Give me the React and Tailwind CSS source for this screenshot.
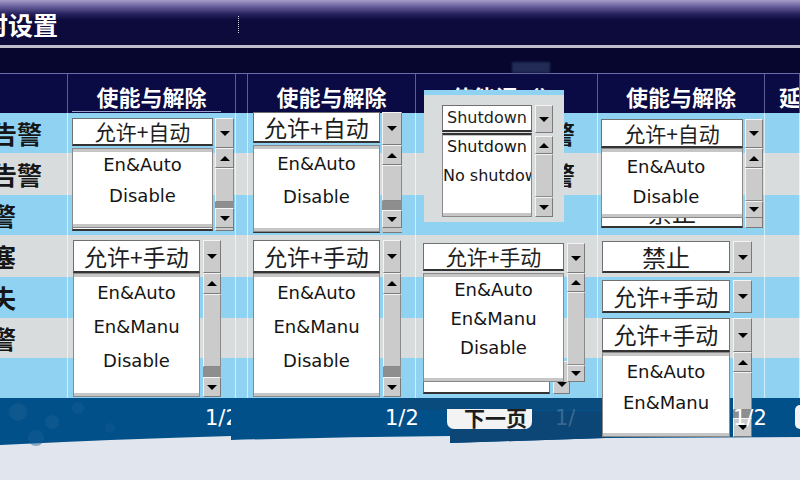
import React from "react";

const CJK = "font-['Noto_Sans_CJK_SC','Noto_Sans',sans-serif]";
const LAT = "font-['DejaVu_Sans','Noto_Sans_CJK_SC',sans-serif]";

function Tri({ up }) {
  return up ? (
    <div className="w-0 h-0 border-l-[5px] border-r-[5px] border-b-[5px] border-l-transparent border-r-transparent border-b-black" />
  ) : (
    <div className="w-0 h-0 border-l-[5px] border-r-[5px] border-t-[5px] border-l-transparent border-r-transparent border-t-black" />
  );
}

function Bevel({ cls = "", children }) {
  return (
    <div
      className={`flex justify-center bg-[#cbcbcb] border border-t-[#f4f4f4] border-l-[#f4f4f4] border-r-[#7a7a7a] border-b-[#7a7a7a] shrink-0 ${cls}`}
    >
      {children}
    </div>
  );
}

function Combo({ boxW, boxH, btnW, btnH, gap, text, size, font = CJK, btnAlign = "items-center" }) {
  return (
    <div className={`flex items-start ${gap}`}>
      <div
        className={`bg-white border border-[#707070] border-b-2 border-b-[#333333] flex items-center justify-center overflow-hidden whitespace-nowrap text-[#1e1e1e] leading-none shrink-0 ${font} ${size} ${boxW} ${boxH}`}
      >
        {text}
      </div>
      <Bevel cls={`${btnW} ${btnH} ${btnAlign}`}>
        <Tri />
      </Bevel>
    </div>
  );
}

function Scroll({ w, sb }) {
  return (
    <div className={`flex flex-col shrink-0 ${w}`}>
      {sb.map(([k, h], i) => {
        if (k === "up")
          return (
            <Bevel key={i} cls={`w-full items-center ${h}`}>
              <Tri up />
            </Bevel>
          );
        if (k === "down")
          return (
            <Bevel key={i} cls={`w-full items-center ${h}`}>
              <Tri />
            </Bevel>
          );
        if (k === "track")
          return (
            <div
              key={i}
              className={`w-full bg-[#cbcbcb] border border-t-[#f4f4f4] border-l-[#f4f4f4] border-r-[#8a8a8a] border-b-[#8a8a8a] ${h}`}
            />
          );
        if (k === "dark") return <div key={i} className={`w-full bg-[#8e8e8e] ${h}`} />;
        if (k === "tail") return <div key={i} className={`w-full bg-[#c6c6c6] ${h}`} />;
        return <div key={i} className={`w-full ${h}`} />;
      })}
    </div>
  );
}

function Dropdown({ combo, list }) {
  const {
    h,
    items,
    pt,
    gap2,
    itemH = "h-[26px] leading-[26px]",
    itemSize = "text-[18px]",
    itemsCls = "",
    bandTop = "h-[3px]",
    topBorder = "",
    sb,
  } = list;
  return (
    <div className="relative w-max">
      <Combo {...combo} />
      <div className={`absolute left-0 top-full z-10 flex items-start ${combo.gap}`}>
        <div
          className={`bg-white border border-[#8a8a8a] flex flex-col overflow-hidden shrink-0 ${topBorder} ${combo.boxW} ${h}`}
        >
          <div className={`bg-[#c6c6c6] shrink-0 ${bandTop}`} />
          <div className={`flex-1 flex flex-col ${pt} ${gap2} ${itemsCls}`}>
            {items.map((t, i) => (
              <div
                key={i}
                className={`text-center whitespace-nowrap overflow-hidden text-[#151515] ${LAT} ${itemSize} ${itemH}`}
              >
                {t}
              </div>
            ))}
          </div>
          <div className="h-[3px] bg-[#c6c6c6] shrink-0" />
        </div>
        <Scroll w={combo.btnW} sb={sb} />
      </div>
    </div>
  );
}

const W = ["w-[68px]", "w-[168px]", "w-[12px]", "w-[168px]", "w-[182px]", "w-[167px]", "w-[35px]"];

function Row({ bg, h, cells }) {
  return (
    <div className={`flex shrink-0 ${bg} ${h}`}>
      {W.map((w, i) => (
        <div key={i} className={`relative h-full shrink-0 border-r border-white/60 ${w}`}>
          {cells[i]}
        </div>
      ))}
    </div>
  );
}

function Label({ text, pr }) {
  return (
    <div className={`h-full flex items-center justify-end overflow-hidden ${pr}`}>
      <span className={`shrink-0 whitespace-nowrap font-bold text-[25px] leading-none text-[#161616] ${CJK}`}>{text}</span>
    </div>
  );
}

const BLUE = "bg-[#8fd2f2]";
const GREY = "bg-[#d9dcdc]";

const items2 = ["En&Auto", "Disable"];
const items3 = ["En&Auto", "En&Manu", "Disable"];

export default function App() {
  return (
    <div className={`w-[800px] h-[480px] overflow-hidden relative flex flex-col bg-[#e1e5ee] ${LAT}`}>
      {/* title bar */}
      <div className="h-[45px] shrink-0 flex items-center overflow-hidden bg-[linear-gradient(to_bottom,#a89dc8_0px,#6c63a0_6px,#26225e_14px,#0c0b3c_20px,#0c0b3c_45px)]">
        <div className={`ml-[-42px] pt-[3px] shrink-0 whitespace-nowrap text-white font-bold text-[25px] leading-none ${CJK}`}>
          延时设置
        </div>
        <div className="ml-[180px] mt-[4px] h-[17px] border-l border-dotted border-white/80" />
      </div>
      <div className="h-[3px] shrink-0 bg-[#bdbdcc]" />
      <div className="h-[25px] shrink-0 bg-[#06062e] flex">
        <div className="ml-[512px] mt-[14px] w-[38px] h-[11px] bg-[#2d3c68] opacity-70 blur-[1px]" />
      </div>

      {/* header */}
      <div className="h-[40px] shrink-0 flex bg-[#0a0a44] border-t border-[#6c6ca8]">
        {W.map((w, i) => {
          const txt = ["", "使能与解除", "", "使能与解除", "使能词（）", "使能与解除", "延时"][i];
          return (
            <div
              key={i}
              className={`relative h-full shrink-0 border-r border-[#5c5c98] flex items-center overflow-hidden pt-[5px] ${
                i === 6 ? "justify-start pl-[14px]" : "justify-center"
              } ${w}`}
            >
              <span className={`whitespace-nowrap text-white font-bold text-[22px] leading-none ${CJK}`}>{txt}</span>
              {i === 1 && <div className="absolute left-[4px] right-[14px] bottom-[1px] h-px bg-[#9aa0c8]" />}
            </div>
          );
        })}
      </div>

      {/* body rows */}
      <Row
        bg={BLUE}
        h="h-[40px]"
        cells={[
          <Label text="过流告警" pr="pr-[25px]" />,
          <div className="pl-[4px] pt-[5px]">
            <Dropdown
              combo={{ boxW: "w-[141px]", boxH: "h-[28px]", btnW: "w-[19px]", btnH: "h-[30px]", gap: "gap-[2px]", text: "允许+自动", size: "text-[21px]" }}
              list={{ h: "h-[80px]", items: items2, pt: "pt-[0px]", gap2: "gap-[5px]", sb: [["up", "h-[20px]"], ["track", "h-[34px]"], ["dark", "h-[6px]"], ["down", "h-[20px]"]] }}
            />
          </div>,
          null,
          <div className="pl-[5px] mt-[-1px]">
            <Dropdown
              combo={{ boxW: "w-[127px]", boxH: "h-[31px]", btnW: "w-[20px]", btnH: "h-[33px]", gap: "gap-[2px]", text: "允许+自动", size: "text-[23px]" }}
              list={{ h: "h-[87px]", items: items2, pt: "pt-[2px]", gap2: "gap-[7px]", sb: [["up", "h-[20px]"], ["track", "h-[36px]"], ["dark", "h-[9px]"], ["down", "h-[18px]"], ["tail", "h-[4px]"]] }}
            />
          </div>,
          <>
            <Label text="警" pr="pr-[22px]" />
            <div className="absolute left-[8px] top-[-23px] w-[140px] h-[132px] z-10 bg-[#d9dcdc] flex flex-col">
              <div className="h-[5px] bg-[#8fd2f2] shrink-0" />
              <div className="pl-[18px] pt-[10px]">
                <Dropdown
                  combo={{ boxW: "w-[90px]", boxH: "h-[27px]", btnW: "w-[18px]", btnH: "h-[28px]", gap: "gap-[3px]", text: "Shutdown", size: "text-[16px]", font: LAT }}
                  list={{
                    h: "h-[84px]",
                    items: ["Shutdown", "No shutdown"],
                    pt: "pt-[0px]",
                    gap2: "gap-[7px]",
                    itemH: "h-[22px] leading-[22px]",
                    itemSize: "text-[16px]",
                    bandTop: "h-[1px]",
                    topBorder: "border-t-2 border-t-[#333333]",
                    sb: [["blank", "h-[3px]"], ["up", "h-[18px]"], ["track", "h-[43px]"], ["down", "h-[20px]"]],
                  }}
                />
              </div>
            </div>
          </>,
          <div className="pl-[3px] pt-[6px]">
            <Dropdown
              combo={{ boxW: "w-[142px]", boxH: "h-[29px]", btnW: "w-[18px]", btnH: "h-[29px]", gap: "gap-[2px]", text: "允许+自动", size: "text-[21px]" }}
              list={{ h: "h-[70px]", items: items2, pt: "pt-[2px]", gap2: "gap-[4px]", itemsCls: "pr-[12px]", sb: [["up", "h-[20px]"], ["track", "h-[33px]"], ["down", "h-[17px]"]] }}
            />
          </div>,
          null,
        ]}
      />
      <Row
        bg={GREY}
        h="h-[42px]"
        cells={[<Label text="超温告警" pr="pr-[25px]" />, null, null, null, <Label text="警" pr="pr-[22px]" />, null, null]}
      />
      <Row
        bg={BLUE}
        h="h-[40px]"
        cells={[
          <Label text="短路报警" pr="pr-[51px]" />,
          <div className="pl-[4px] pt-[3px]">
            <Combo boxW="w-[141px]" boxH="h-[33px]" btnW="w-[19px]" btnH="h-[33px]" gap="gap-[2px]" text="禁止" size="text-[21px]" />
          </div>,
          null,
          <div className="pl-[5px] pt-[5px]">
            <Combo boxW="w-[127px]" boxH="h-[33px]" btnW="w-[20px]" btnH="h-[33px]" gap="gap-[2px]" text="禁止" size="text-[23px]" />
          </div>,
          null,
          <div className="pl-[3px] pt-[1px]">
            <Combo boxW="w-[142px]" boxH="h-[32px]" btnW="w-[18px]" btnH="h-[32px]" gap="gap-[2px]" text="禁止" size="text-[24px]" />
          </div>,
          null,
        ]}
      />
      <Row
        bg={GREY}
        h="h-[42px]"
        cells={[
          <Label text="堵塞" pr="pr-[51px]" />,
          <div className="pl-[5px] pt-[5px]">
            <Dropdown
              combo={{ boxW: "w-[127px]", boxH: "h-[33px]", btnW: "w-[18px]", btnH: "h-[33px]", gap: "gap-[3px]", text: "允许+手动", size: "text-[23px]" }}
              list={{ h: "h-[124px]", items: items3, pt: "pt-[3px]", gap2: "gap-[8px]", sb: [["up", "h-[21px]"], ["track", "h-[73px]"], ["dark", "h-[10px]"], ["down", "h-[20px]"]] }}
            />
          </div>,
          null,
          <div className="pl-[5px] pt-[5px]">
            <Dropdown
              combo={{ boxW: "w-[127px]", boxH: "h-[33px]", btnW: "w-[18px]", btnH: "h-[33px]", gap: "gap-[3px]", text: "允许+手动", size: "text-[23px]" }}
              list={{ h: "h-[124px]", items: items3, pt: "pt-[3px]", gap2: "gap-[8px]", sb: [["up", "h-[21px]"], ["track", "h-[73px]"], ["dark", "h-[10px]"], ["down", "h-[20px]"]] }}
            />
          </div>,
          <div className="pl-[7px] pt-[8px]">
            <Dropdown
              combo={{ boxW: "w-[141px]", boxH: "h-[28px]", btnW: "w-[18px]", btnH: "h-[30px]", gap: "gap-[3px]", text: "允许+手动", size: "text-[21px]" }}
              list={{ h: "h-[109px]", items: items3, pt: "pt-[1px]", gap2: "gap-[5px]", itemH: "h-[24px] leading-[24px]", sb: [["up", "h-[19px]"], ["track", "h-[73px]"], ["down", "h-[17px]"]] }}
            />
          </div>,
          <div className="pl-[4px] pt-[6px]">
            <Combo boxW="w-[128px]" boxH="h-[32px]" btnW="w-[19px]" btnH="h-[32px]" gap="gap-[3px]" text="禁止" size="text-[24px]" />
          </div>,
          null,
        ]}
      />
      <Row
        bg={BLUE}
        h="h-[41px]"
        cells={[
          <Label text="丢失" pr="pr-[51px]" />,
          null,
          null,
          null,
          null,
          <div className="pl-[4px] pt-[3px]">
            <Combo boxW="w-[128px]" boxH="h-[33px]" btnW="w-[19px]" btnH="h-[33px]" gap="gap-[3px]" text="允许+手动" size="text-[23px]" />
          </div>,
          null,
        ]}
      />
      <Row
        bg={GREY}
        h="h-[40px]"
        cells={[
          <Label text="报警" pr="pr-[51px]" />,
          null,
          null,
          null,
          null,
          <div className="pl-[4px]">
            <Dropdown
              combo={{ boxW: "w-[128px]", boxH: "h-[34px]", btnW: "w-[19px]", btnH: "h-[34px]", gap: "gap-[3px]", text: "允许+手动", size: "text-[23px]" }}
              list={{ h: "h-[85px]", items: ["En&Auto", "En&Manu"], pt: "pt-[3px]", gap2: "gap-[5px]", sb: [["up", "h-[20px]"], ["track", "h-[38px]"], ["dark", "h-[8px]"], ["down", "h-[19px]"]] }}
            />
          </div>,
          null,
        ]}
      />
      <Row
        bg={BLUE}
        h="h-[40px]"
        cells={[
          null,
          null,
          null,
          null,
          <div className="pl-[7px] pt-[3px]">
            <Combo boxW="w-[127px]" boxH="h-[33px]" btnW="w-[17px]" btnH="h-[33px]" gap="gap-[3px]" text="" size="text-[21px]" btnAlign="items-end pb-[6px]" />
          </div>,
          null,
          null,
        ]}
      />

      {/* footer */}
      <div className="relative h-[82px] shrink-0">
        <svg className="absolute inset-0" width="800" height="82" viewBox="0 0 800 82">
          <rect width="800" height="82" fill="#e1e5ee" />
          <path d="M0 0H231V38Q120 41 0 47Z" fill="#02508a" />
          <circle cx="18" cy="14" r="9" fill="#175d93" opacity="0.6" />
          <circle cx="52" cy="24" r="7" fill="#175d93" opacity="0.5" />
          <circle cx="36" cy="40" r="8" fill="#175d93" opacity="0.45" />
          <circle cx="78" cy="10" r="6" fill="#175d93" opacity="0.45" />
          <circle cx="110" cy="30" r="5" fill="#175d93" opacity="0.35" />
          <path d="M231 0H450V38Q340 39 231 42Z" fill="#02508a" />
          <path d="M450 0H605V40L450 45Z" fill="#02508a" />
          <path d="M450 13H605V40L450 45Z" fill="#0b4677" />
          <path d="M400 0H605V12H400Z" fill="#0a4b7e" />
          <path d="M605 0H800V39L605 40Z" fill="#02508a" />
        </svg>
        <div className="relative z-20 flex h-[40px] items-center text-white text-[21px] leading-none">
          <div className="w-[231px] shrink-0 overflow-hidden pl-[205px] whitespace-nowrap">1/2</div>
          <div className="w-[216px] shrink-0 pl-[154px] whitespace-nowrap">1/2</div>
          <div className="w-[85px] h-[20px] shrink-0 self-start mt-[11px] bg-[#f3f3f3] rounded-b-[7px] overflow-hidden flex justify-center pl-[12px]">
            <span className={`mt-[-3px] text-[21px] leading-[22px] font-bold text-[#1c1c1c] whitespace-nowrap ${CJK}`}>下一页</span>
          </div>
          <div className="w-[201px] shrink-0 pl-[23px]">
            <div className="w-[20px] overflow-hidden whitespace-nowrap text-white/20">1/2</div>
          </div>
          <div className="w-[62px] shrink-0 whitespace-nowrap">1/2</div>
          <div className="w-[5px] h-[24px] shrink-0 self-start mt-[7px] bg-[#f3f3f3] rounded-l-[6px]" />
        </div>
      </div>
    </div>
  );
}
